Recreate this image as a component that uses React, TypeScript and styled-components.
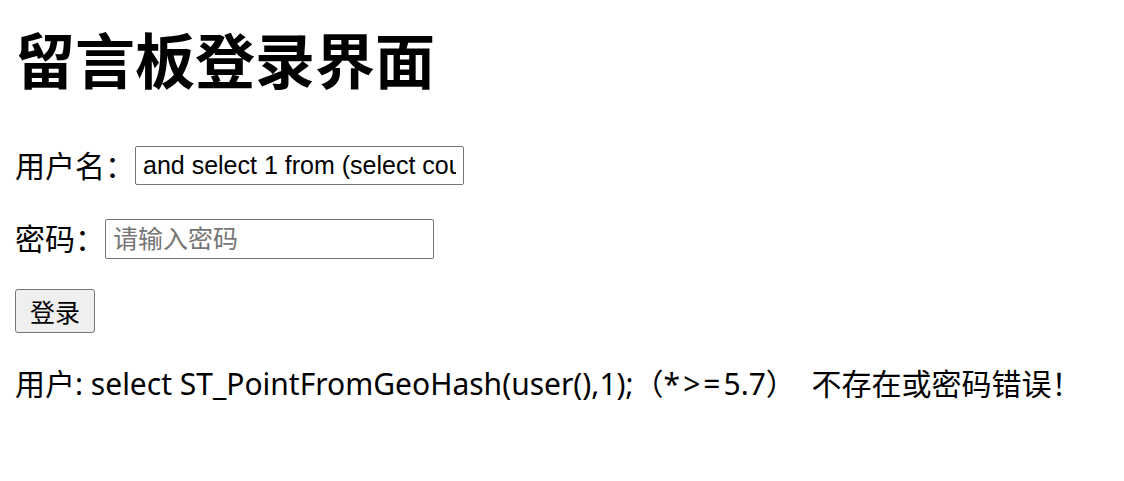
import styled, { createGlobalStyle } from 'styled-components'

const GlobalStyle = createGlobalStyle`
  body {
    margin: 0;
    background: #ffffff;
    color: #000000;
    font-family: "Noto Sans CJK SC", sans-serif;
  }
`

const Page = styled.div`
  padding: 0 15px;
  display: flex;
  flex-direction: column;
`

const Title = styled.h1`
  margin: 26px 0 0;
  font-size: 60px;
  line-height: 63px;
  font-weight: 700;
  font-family: "Noto Sans CJK SC", sans-serif;
`

const FormRow = styled.div<{ $top: number }>`
  display: flex;
  align-items: center;
  margin-top: ${(p) => p.$top}px;
`

const Label = styled.label`
  padding-bottom: 4px;
  font-size: 30px;
  line-height: 34px;
  font-family: "Noto Sans CJK SC", sans-serif;
`

const TextInput = styled.input<{ $height: number }>`
  box-sizing: border-box;
  width: 329px;
  height: ${(p) => p.$height}px;
  padding: 0 7px;
  border: 1px solid #767676;
  border-radius: 2px;
  font-size: 25px;
  font-family: "Liberation Sans", "Noto Sans CJK SC", sans-serif;
  color: #000000;
  background: #ffffff;
  outline: none;

  &::placeholder {
    color: #757575;
    font-family: "Noto Sans CJK SC", sans-serif;
  }
`

const SubmitButton = styled.button`
  align-self: flex-start;
  box-sizing: border-box;
  width: 80px;
  height: 44px;
  margin-top: 30px;
  padding: 0;
  border: 1px solid #767676;
  border-radius: 3px;
  background: #efefef;
  font-size: 25px;
  font-family: "Noto Sans CJK SC", sans-serif;
  color: #000000;
`

const Result = styled.p`
  margin: 31px 0 0;
  font-size: 30px;
  line-height: 40px;
  font-family: "Noto Sans", "Noto Sans CJK SC", sans-serif;
  white-space: nowrap;
`

const Spaced = styled.span`
  letter-spacing: 3px;
`

export default function App() {
  return (
    <>
      <GlobalStyle />
      <Page>
        <Title>留言板登录界面</Title>
        <FormRow $top={57}>
          <Label htmlFor="username">用户名：</Label>
          <TextInput
            id="username"
            $height={39}
            defaultValue="and select 1 from (select count(*),concat(user(),floor(rand(0)*2))x from information_schema.tables group by x)a"
          />
        </FormRow>
        <FormRow $top={34}>
          <Label htmlFor="password">密码：</Label>
          <TextInput id="password" type="password" $height={40} placeholder="请输入密码" />
        </FormRow>
        <SubmitButton>登录</SubmitButton>
        <Result>
          用户: select ST_PointFromGeoHash(user(),1);（<Spaced>*&gt;=</Spaced>5.7）&nbsp; 不存在或密码错误！
        </Result>
      </Page>
    </>
  )
}
